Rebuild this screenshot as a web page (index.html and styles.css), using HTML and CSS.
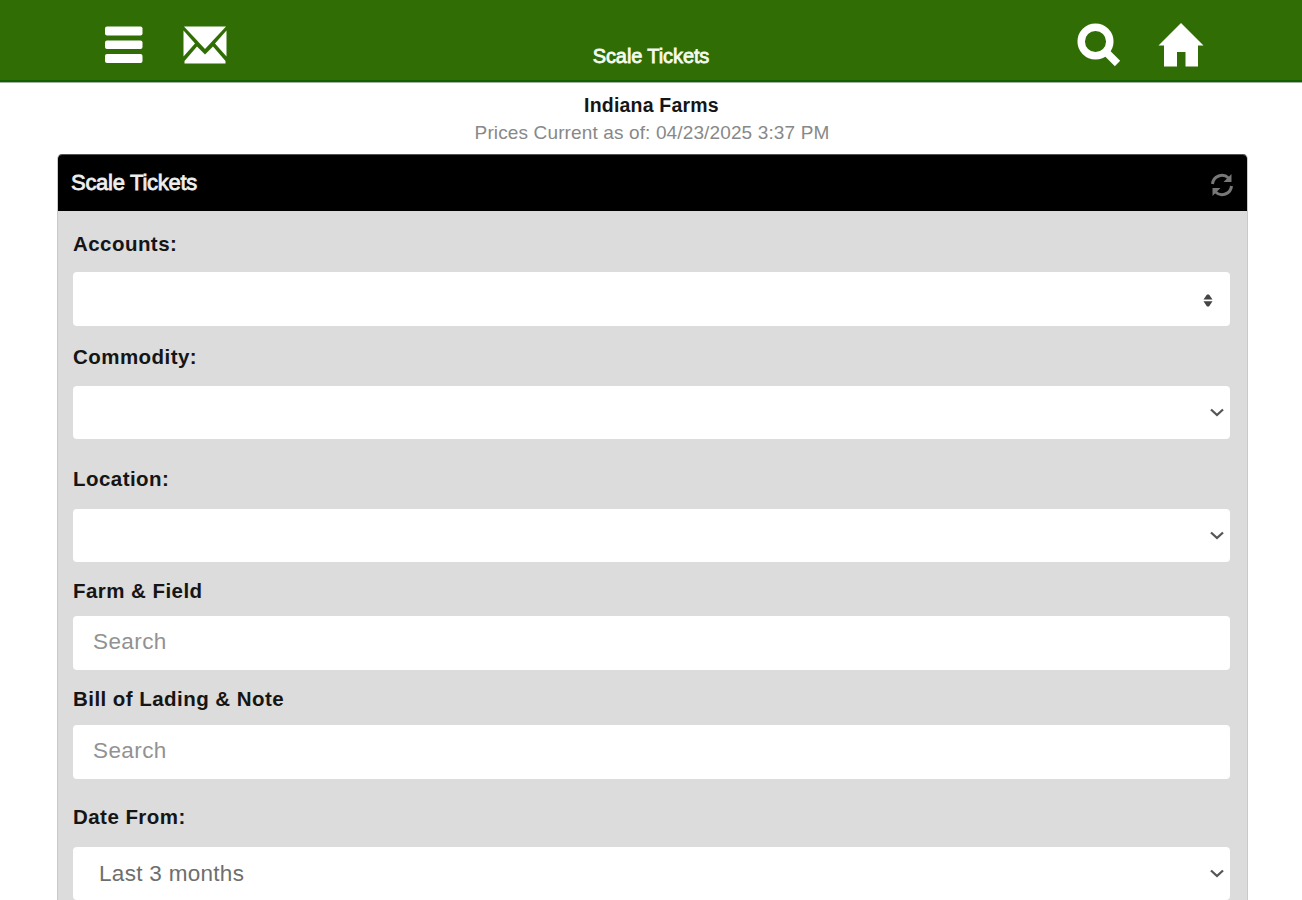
FILE: index.html
```html
<!DOCTYPE html>
<html lang="en">
<head>
<meta charset="utf-8">
<title>Scale Tickets</title>
<link rel="stylesheet" href="styles.css">
</head>
<body>
<header class="topbar">
  <nav class="nav nav-left">
    <svg class="icon-menu" width="38" height="38" viewBox="0 0 38 38"><rect y="0.500" width="37.500" height="9" rx="2"/><rect y="14.500" width="37.500" height="8.500" rx="2"/><rect y="28" width="37.500" height="9" rx="2"/></svg>
    <svg class="icon-mail" width="44" height="38" viewBox="0 0 44 38"><path d="M1 0.500H43L22 23Z"/><path d="M0.500 4.500L12 17.500L0.500 30.500ZM43.500 4.500L32 17.500L43.500 30.500Z"/><path d="M14 20.500L22 28.500L30 20.500L42.500 35V37.500H1.500V35Z"/></svg>
  </nav>
  <h1 class="topbar-title">Scale Tickets</h1>
  <nav class="nav nav-right">
    <svg class="icon-search" width="44" height="44" viewBox="0 0 44 44"><circle cx="18.500" cy="18.500" r="14.300"/><path d="M28.500 28.500L40.500 40.500"/></svg>
    <svg class="icon-home" width="46" height="44" viewBox="0 0 46 44"><path d="M23 0L45.500 22.500H40V43.500H27.500V29H19V43.500H6V22.500H.500Z"/></svg>
  </nav>
</header>
<main class="page">
  <div class="farm">Indiana Farms</div>
  <div class="prices">Prices Current as of: 04/23/2025 3:37 PM</div>
  <section class="panel">
    <div class="panel-head">
      <h2 class="panel-title">Scale Tickets</h2>
      <svg class="icon-refresh" width="24" height="24" viewBox="0 0 24 24"><path class="arc" d="M2.500 11A9.500 9.500 0 0 1 18.500 5M21.500 13A9.500 9.500 0 0 1 5.500 19"/><path class="tip" d="M21.500 1V9H13.500ZM2.500 23V15H10.500Z"/></svg>
    </div>
    <form class="filters">
      <div class="row accounts"><label class="label">Accounts:</label>
        <div class="field"><svg class="sorter" width="10" height="13" viewBox="0 0 10 13"><path d="M4 .500H6L9.500 5.500H.500ZM4 12.500H6L9.500 7.200H.500Z"/></svg></div></div>
      <div class="row commodity"><label class="label">Commodity:</label>
        <div class="field"><svg class="chevron" width="14" height="9" viewBox="0 0 14 9"><path d="M1 1.500L7 7L13 1.500"/></svg></div></div>
      <div class="row location"><label class="label">Location:</label>
        <div class="field"><svg class="chevron" width="14" height="9" viewBox="0 0 14 9"><path d="M1 1.500L7 7L13 1.500"/></svg></div></div>
      <div class="row farm-field"><label class="label">Farm &amp; Field</label>
        <div class="field"><span class="placeholder">Search</span></div></div>
      <div class="row lading"><label class="label">Bill of Lading &amp; Note</label>
        <div class="field"><span class="placeholder">Search</span></div></div>
      <div class="row date-from"><label class="label">Date From:</label>
        <div class="field"><span class="value">Last 3 months</span><svg class="chevron" width="14" height="9" viewBox="0 0 14 9"><path d="M1 1.500L7 7L13 1.500"/></svg></div></div>
    </form>
  </section>
</main>
</body>
</html>
```
FILE: styles.css
```css
* { box-sizing: border-box; }
html, body { height: 100%; }
body {
  margin: 0;
  overflow: hidden;
  background: #fff;
  font-family: "Liberation Sans", Arial, sans-serif;
}
.topbar {
  height: 83px;
  display: grid;
  grid-template-columns: 1fr auto 1fr;
  background: #306d04;
  border-bottom: 1px solid #a3b0a0;
  box-shadow: inset 0 -2px 0 #125f04;
}
.nav { display: flex; fill: #fff; }
.nav-left { padding: 26px 0 0 105px; gap: 40px; }
.nav-right { justify-content: flex-end; padding: 23px 98px 0 0; gap: 37px; }
.icon-search { fill: none; stroke: #fff; stroke-width: 7.5; }
.topbar-title {
  margin: 0;
  padding-top: 44px;
  font-size: 20px;
  line-height: 24px;
  font-weight: 400;
  letter-spacing: -0.1px;
  color: #f5faf0;
  -webkit-text-stroke: 0.8px #f5faf0;
}
.page { padding: 0 54px 0 57px; }
.farm {
  padding: 10px 2px 0 0;
  font-size: 19.5px;
  line-height: 24px;
  font-weight: 700;
  letter-spacing: 0.2px;
  text-align: center;
  color: #151515;
}
.prices {
  padding: 4px 1px 0 0;
  font-size: 19px;
  line-height: 24px;
  letter-spacing: 0.13px;
  text-align: center;
  color: #888;
}
.panel {
  margin-top: 9px;
  height: 746px;
  border: 1px solid #c9c9c9;
  border-top-color: #555;
  border-bottom: 0;
  border-radius: 5px 5px 0 0;
  background: #dcdcdc;
  overflow: hidden;
}
.panel-head {
  height: 56px;
  display: flex;
  justify-content: space-between;
  align-items: center;
  padding: 0 13px;
  background: #000;
}
.panel-title {
  margin: 0;
  font-size: 22px;
  line-height: 26px;
  font-weight: 400;
  letter-spacing: -0.28px;
  color: #eee;
  -webkit-text-stroke: 0.8px #eee;
}
.icon-refresh { margin-top: 4px; }
.arc { fill: none; stroke: #777; stroke-width: 3; }
.tip { fill: #777; }
.filters { padding: 21px 17px 0 15px; }
.row { display: grid; }
.label {
  font-size: 20.5px;
  line-height: 24px;
  font-weight: 700;
  letter-spacing: 0.45px;
  color: #151515;
}
.field {
  height: 54px;
  display: flex;
  align-items: center;
  padding: 0 6px 0 20px;
  border-radius: 4px;
  background: #fff;
  font-size: 22.5px;
  line-height: 26px;
}
.accounts { row-gap: 16px; margin-bottom: 19px; }
.accounts .field { padding-right: 17px; }
.commodity { row-gap: 17px; margin-bottom: 28px; }
.commodity .field { height: 53px; }
.location { row-gap: 18px; margin-bottom: 17px; }
.location .field { height: 53px; }
.farm-field { row-gap: 13px; margin-bottom: 17px; }
.lading { row-gap: 14px; margin-bottom: 26px; }
.date-from { row-gap: 18px; }
.date-from .field { height: 53px; }
.placeholder { margin-top: -2px; letter-spacing: 0.4px; color: #929292; }
.value { padding-left: 6px; letter-spacing: 0.3px; color: #6e6e6e; }
.sorter { margin: 2px 0 0 auto; fill: #444; }
.chevron { margin-left: auto; fill: none; stroke: #555; stroke-width: 2.3; }
```
